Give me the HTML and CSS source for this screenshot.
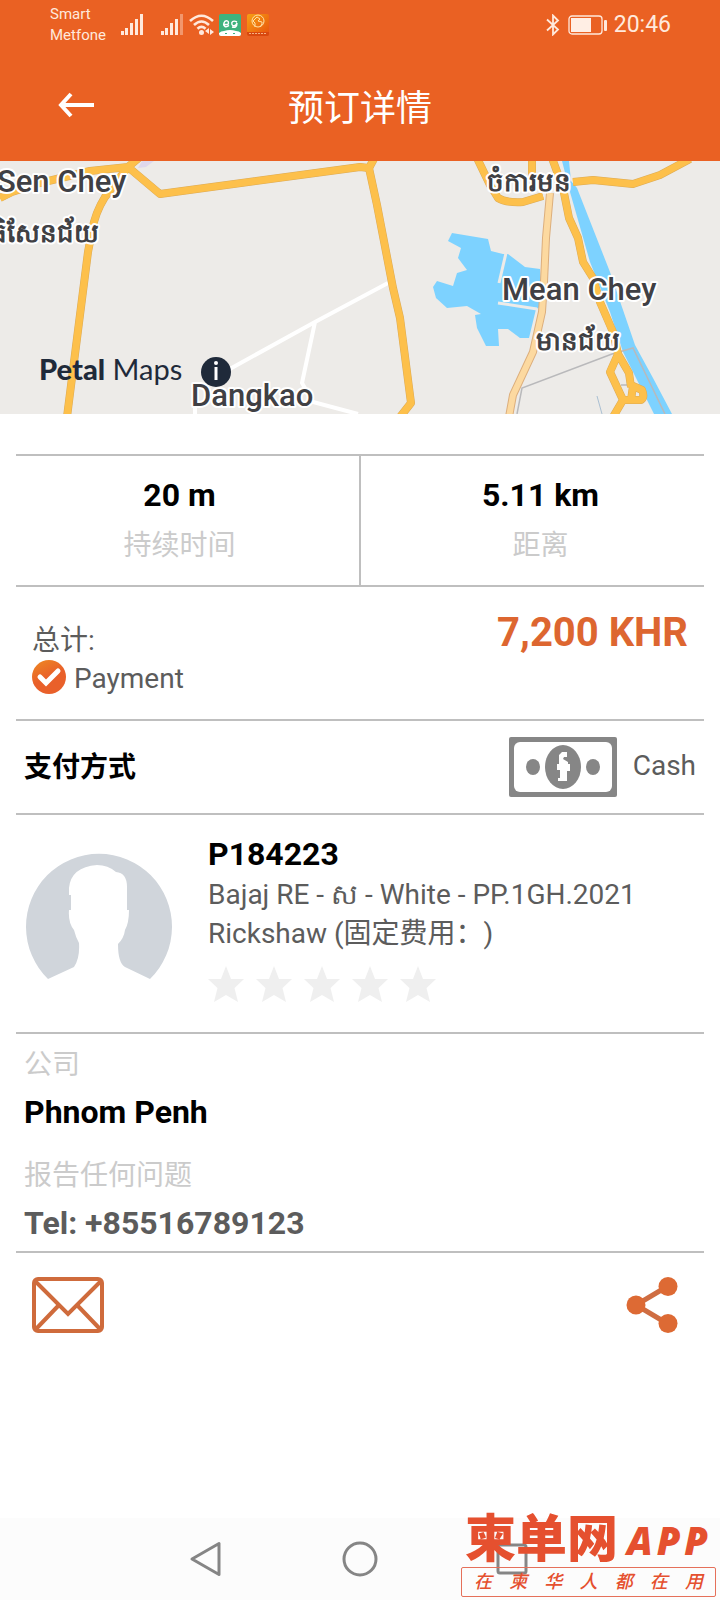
FILE: index.html
```html
<!DOCTYPE html>
<html lang="zh-CN">
<head>
  <meta charset="UTF-8">
  <meta name="viewport" content="width=device-width, initial-scale=1.0">
  <title>预订详情</title>
  <link rel="stylesheet" href="styles.css">
</head>
<body>
  <header class="header">
    <div class="status-bar">
      <div class="carriers">Smart<br>Metfone</div>
      <svg class="signal" width="22" height="22" viewBox="0 0 22 22" fill="#ffe9dc">
        <rect x="0" y="17" width="3" height="4"/><rect x="4" y="14" width="3" height="7"/><rect x="9" y="9" width="3" height="12"/><rect x="14" y="5" width="3" height="16"/><rect x="19" y="0" width="3" height="21"/>
      </svg>
      <svg class="signal" width="22" height="22" viewBox="0 0 22 22" fill="#ffe9dc">
        <rect x="0" y="17" width="3" height="4"/><rect x="4" y="14" width="3" height="7"/><rect x="9" y="9" width="3" height="12"/><rect x="14" y="5" width="3" height="16"/><rect x="19" y="0" width="3" height="21" opacity=".4"/>
      </svg>
      <svg class="wifi" width="26" height="22" viewBox="0 0 26 22">
        <g fill="none" stroke="#ffe9dc" stroke-width="2.6"><path d="M1 7Q12.500-3.500 24 7"/><path d="M5 11Q12.500 4 20 11"/><path d="M8.500 14.800Q12.500 11 16.500 14.800"/></g>
        <circle cx="12.500" cy="18.500" r="2.500" fill="#ffe9dc"/>
        <path d="M16 17l4-3v6zM25 18l-4-3v6z" fill="#ffe9dc"/>
      </svg>
      <svg class="app-green" width="22" height="22" viewBox="0 0 22 22">
        <rect width="22" height="22" rx="2" fill="#3eb27e"/>
        <path d="M4 10.500h5c2-4-3-5-4-1.500s2 5 5 2.500M18 8c-4-2-6 0-5 2.500s4 1 5-1.500c0 4-2 5-5 4" fill="none" stroke="#fff" stroke-width="1.400"/>
        <path d="M0 19q2-2 5-2 6-2 12 0 3 0 5 2v1q0 2-2 2H2q-2 0-2-2z" fill="#fff"/>
        <path d="M6 19h2v1H6zM14 19h2v1h-2z" fill="#3eb27e"/>
      </svg>
      <svg width="22" height="22" viewBox="0 0 22 22">
        <defs><linearGradient id="appOrange" x1="0" y1="0" x2="1" y2="1"><stop offset="0" stop-color="#f7a014"/><stop offset="1" stop-color="#e8500c"/></linearGradient></defs>
        <rect width="22" height="22" rx="2" fill="url(#appOrange)"/>
        <circle cx="11" cy="7" r="6" fill="none" stroke="#ffe2a8"/>
        <path d="M8 13V9L6 7l4-4 3 2-2 2 4 1v2l-2 3" fill="none" stroke="#ffe2a8"/>
        <path d="M0 18h22v2q0 2-2 2H2q-2 0-2-2z" fill="#d9480f"/>
        <path d="M2 19.500h18" stroke="#f4b183" stroke-dasharray="2 1"/>
      </svg>
      <div class="status-right">
        <svg width="14" height="22" viewBox="0 0 14 22" fill="none" stroke="#ffe9dc" stroke-width="1.800"><path d="M1 5.500L12 15.500L7 20.500V1.500L12 6.500L1 16.500"/></svg>
        <svg width="40" height="20" viewBox="0 0 40 20">
          <rect x="1" y="1" width="33" height="18" rx="3" fill="none" stroke="#ffe9dc" stroke-width="1.300"/>
          <rect x="3" y="3" width="20" height="14" fill="#ffeee4"/>
          <rect x="36" y="5" width="3" height="11" rx="1" fill="#ffe9dc"/>
        </svg>
        <span class="time">20:46</span>
      </div>
    </div>
    <div class="app-bar">
      <button class="back-btn" aria-label="返回">
        <svg width="36" height="26" viewBox="0 0 36 26" fill="none" stroke="#fff" stroke-width="4"><path d="M2 13H36M13 2L3 13L13 24"/></svg>
      </button>
      <h1 class="title">预订详情</h1>
    </div>
  </header>

  <svg class="map" viewBox="0 0 720 253" preserveAspectRatio="xMidYMid slice">
    <defs>
      <g id="roads" fill="none" stroke-linejoin="round">
        <path d="M0 37L12 31L40 22L90 10L128 6L140-4M128 6L160 33L360 6L369 7L375-4"/>
        <path d="M369 7L377 44L393 127L400 157L411 242L400 256"/>
        <path d="M128 6L105 36Q95 52 92 70L88 91L67 256"/>
        <path d="M477-3L490 24L498 37Q506 42 523 41L543 35M532-2V16"/>
        <path d="M552-3L563 27L569 57L578 77L583 101L593 117L600 141L613 171L618 193"/>
        <path d="M618 193L610 211L623 239L613 256M618 193L629 212L631 226M624 239H641Q645 236 642 229L633 225L631 239"/>
        <path d="M573 21L593 19L633 23L660 14L690-2"/>
      </g>
      <path id="side-road" fill="none" d="M550 32L546 77L544 121L542 151L533 191L513 234L509 256"/>
    </defs>
    <rect width="720" height="253" fill="#edebe8"/>
    <path d="M142 0h12l-8 6-8 1z" fill="#dfd8ec"/>

    <!-- water -->
    <g fill="#7dd2ff">
      <path d="M562 0H569L571 20L577 27L610 111L635 184L653 217L672 253H654L623 191L610 151L590 101L570 31Z"/>
      <path d="M452 72L488 78L491 90L503 93L508 93L525 106L540 108L542 145L536 148L529 177H520L508 168H498L499 185H486L477 167L475 154L481 153L467 145L447 147L436 137L433 126L437 120L453 125L457 112L467 109L458 97L461 87L448 80Z"/>
    </g>
    <path d="M506 92L499 122M498 142L537 148" fill="none" stroke="#edebe8" stroke-width="3"/>

    <!-- small roads and borders -->
    <path d="M228 209L315 161L388 122M315 161L302 222L313 241L358 253M195 246V253" fill="none" stroke="#fff" stroke-width="4"/>
    <path d="M517 253L522 227L612 193L633 187L665 253M621 224H632" fill="none" stroke="#b9b9bb" stroke-width="1.500"/>
    <path d="M597 235L602 253" stroke="#a9bfd2"/>

    <!-- main roads, casing first -->
    <use href="#roads" stroke="#dcaa55" stroke-width="8"/>
    <use href="#roads" stroke="#fdc04b" stroke-width="7"/>
    <use href="#side-road" stroke="#dcae7c" stroke-width="8"/>
    <use href="#side-road" stroke="#fcd9a0" stroke-width="6"/>

    <g class="place">
      <text x="-3" y="31">Sen Chey</text>
      <text x="502" y="139">Mean Chey</text>
      <text x="191" y="245">Dangkao</text>
    </g>
    <g class="place khmer">
      <text x="99" y="81" text-anchor="end">ធិសែនជ័យ</text>
      <text x="487" y="30">ចំការមន</text>
      <text x="536" y="189">មានជ័យ</text>
    </g>
    <text class="map-logo" x="39" y="219"><tspan class="map-logo-bold">Petal</tspan> Maps</text>
    <circle cx="216" cy="211" r="15" fill="#1f2a3a"/>
    <path d="M216 206V219" stroke="#fff" stroke-width="3"/>
    <circle cx="216" cy="202" r="2" fill="#fff"/>
  </svg>

  <main class="details">
    <section class="stats">
      <div class="stat">
        <div class="value">20 m</div>
        <div class="label">持续时间</div>
      </div>
      <div class="stat">
        <div class="value">5.11 km</div>
        <div class="label">距离</div>
      </div>
    </section>

    <section class="total">
      <div>
        <div class="total-line">总计:</div>
        <div class="total-line">
          <svg width="34" height="34" viewBox="0 0 34 34">
            <defs><linearGradient id="check" x1="0" y1="0" x2=".5" y2="1"><stop offset="0" stop-color="#ee8a22"/><stop offset=".6" stop-color="#e9602a"/></linearGradient></defs>
            <circle cx="17" cy="17" r="17" fill="url(#check)"/>
            <path d="M8 17L14 23L26 11" fill="none" stroke="#fff" stroke-width="5" stroke-linecap="round"/>
          </svg>
          <span class="payment">Payment</span>
        </div>
      </div>
      <div class="amount">7,200 KHR</div>
    </section>

    <section class="method">
      <h2 class="method-title">支付方式</h2>
      <svg width="108" height="60" viewBox="0 0 108 60">
        <rect width="108" height="60" rx="2" fill="#868686"/>
        <rect x="5" y="5" width="98" height="50" rx="6" fill="#fff"/>
        <ellipse cx="54" cy="30" rx="18" ry="22" fill="#868686"/>
        <ellipse cx="24" cy="30" rx="7" ry="8" fill="#868686"/>
        <ellipse cx="84" cy="30" rx="7" ry="8" fill="#868686"/>
        <path d="M49 44V41H51V33H48V27H50V18L53 15H58V20H55L54 22L59 25V27H61V34H58V44Z" fill="#fff"/>
      </svg>
      <span class="method-name">Cash</span>
    </section>

    <section class="driver">
      <svg class="avatar" width="146" height="146" viewBox="0 0 146 146">
        <path d="M22 126A73 73 0 1 1 124 126L99 114Q92 110 92 91Q98 85 99 77Q103 70 103 57H101V34Q101 20 90 19Q82 12 71 12Q45 14 43 35V42H45V57H43Q42 70 48 77Q50 85 53 90Q54 105 48 114Z" fill="#d0d5db"/>
      </svg>
      <div class="driver-info">
        <div class="driver-name">P184223</div>
        <div>Bajaj RE - ស - White - PP.1GH.2021</div>
        <div>Rickshaw (固定费用：)</div>
        <div class="stars" role="img" aria-label="0 / 5">
          <svg width="36" height="36" viewBox="0 0 36 36"><path id="star" d="M18 0L23 13H36L26.500 22L30 36L18 29L6 36L9.500 22L0 13H13Z" fill="#efefef"/></svg>
          <svg width="36" height="36" viewBox="0 0 36 36"><use href="#star"/></svg>
          <svg width="36" height="36" viewBox="0 0 36 36"><use href="#star"/></svg>
          <svg width="36" height="36" viewBox="0 0 36 36"><use href="#star"/></svg>
          <svg width="36" height="36" viewBox="0 0 36 36"><use href="#star"/></svg>
        </div>
      </div>
    </section>

    <section class="company">
      <div>
        <div class="label">公司</div>
        <div class="company-value">Phnom Penh</div>
      </div>
      <div>
        <div class="label">报告任何问题</div>
        <a class="company-value tel" href="tel:+85516789123">Tel: +85516789123</a>
      </div>
    </section>

    <section class="actions">
      <button class="icon-btn" aria-label="邮件">
        <svg width="72" height="56" viewBox="0 0 72 56" fill="none" stroke="#cf6b3c" stroke-width="4"><rect x="2" y="2" width="68" height="52" rx="4"/><path d="M3 4L36 37L69 4M4 52L27 28M68 52L45 28"/></svg>
      </button>
      <button class="icon-btn" aria-label="分享">
        <svg width="52" height="56" viewBox="0 0 52 56" fill="#dd6a34"><path d="M42 9L10 28L42 47" fill="none" stroke="#cf6d42" stroke-width="5"/><circle cx="42" cy="9.500" r="9.500"/><circle cx="10" cy="28" r="9.500"/><circle cx="42" cy="46.500" r="9.500"/></svg>
      </button>
    </section>
  </main>

  <footer class="nav-bar">
    <button class="nav-btn" aria-label="后退">
      <svg width="36" height="36" viewBox="0 0 36 36"><path d="M31 2.500V33.500L4 18Z"/></svg>
    </button>
    <button class="nav-btn" aria-label="主页">
      <svg width="36" height="36" viewBox="0 0 36 36"><circle cx="18" cy="18" r="16"/></svg>
    </button>
    <button class="nav-btn" aria-label="最近">
      <svg width="36" height="36" viewBox="0 0 36 36"><rect x="2" y="4" width="28" height="28" rx="2"/></svg>
    </button>
    <div class="brand">
      <div class="brand-top">
        <span class="brand-name">柬单网</span>
        <span class="brand-app"><span>A</span><span>P</span><span>P</span></span>
      </div>
      <div class="brand-slogan"><span>在</span><span>柬</span><span>华</span><span>人</span><span>都</span><span>在</span><span>用</span></div>
    </div>
  </footer>
</body>
</html>
```
FILE: styles.css
```css
* {
  box-sizing: border-box;
}
body {
  margin: 0;
  min-height: 100vh;
  display: flex;
  flex-direction: column;
  background: #fff;
  color: #5c5c5c;
  font-family: Roboto, "Noto Sans CJK SC", sans-serif;
  font-size: 28px;
  text-spacing-trim: space-all;
}
svg {
  display: block;
  flex: none;
}
button {
  padding: 0;
  border: none;
  background: none;
  cursor: pointer;
}

/* header */
.header {
  background: #ea6123;
  color: #fff;
}
.status-bar {
  display: flex;
  align-items: center;
  height: 49px;
  padding: 0 49px 0 50px;
  color: #ffe9dc;
}
.carriers {
  width: 71px;
  padding-top: 1px;
  font-size: 15px;
  line-height: 21px;
}
.signal {
  margin-right: 18px;
}
.signal + .signal {
  margin-right: 6px;
}
.wifi {
  margin-right: 4px;
}
.app-green {
  margin-right: 6px;
}
.status-right {
  display: flex;
  align-items: center;
  gap: 8px;
  margin-left: auto;
}
.time {
  margin-left: -2px;
  font-size: 23px;
}
.app-bar {
  display: grid;
  grid-template-columns: 1fr auto 1fr;
  align-items: center;
  height: 112px;
  padding: 0 58px;
}
.title {
  margin: 0;
  font-size: 36px;
  font-weight: 400;
}

/* map */
.map {
  width: 100%;
}
.place {
  font-size: 31px;
  font-weight: 500;
  fill: #404044;
  stroke: #fff;
  stroke-width: 4px;
  stroke-linejoin: round;
  paint-order: stroke;
}
.khmer {
  font-size: 26px;
  font-weight: 600;
}
.map-logo {
  font-family: Lato, sans-serif;
  font-size: 29px;
  fill: #1f2a3a;
}
.map-logo-bold {
  font-weight: 900;
}

/* details */
.details {
  padding: 40px 16px 0;
}
.details section {
  border-bottom: 2px solid #bfbfbf;
}
.label {
  padding-top: 3px;
  color: #cbcbcb;
}
.stats {
  display: flex;
  border-top: 2px solid #bfbfbf;
}
.stat {
  flex: 1;
  padding: 15px 16px 15px 0;
  line-height: 48px;
  text-align: center;
}
.stat + .stat {
  padding-right: 0;
  padding-left: 16px;
  border-left: 2px solid #bfbfbf;
}
.value {
  color: #000;
  font-size: 32px;
  font-weight: 700;
}
.total {
  display: flex;
  justify-content: space-between;
  padding: 22px 16px;
}
.total-line {
  display: flex;
  align-items: center;
  gap: 8px;
  height: 40px;
}
.total-line:first-child {
  height: 48px;
  padding-top: 10px;
}
.payment {
  padding-top: 3px;
}
.amount {
  color: #dd6630;
  font-size: 40px;
  font-weight: 700;
  line-height: 48px;
}
.method {
  display: flex;
  align-items: center;
  gap: 16px;
  padding: 16px 8px;
}
.method-title {
  flex: 1;
  margin: 0;
  padding-bottom: 4px;
  color: #000;
  font-size: 28px;
  font-weight: 700;
}
.method-name {
  padding-bottom: 4px;
}
.driver {
  display: flex;
  gap: 36px;
  padding: 20px 10px 30px;
  line-height: 39px;
}
.avatar {
  margin-top: 18px;
}
.driver-name {
  padding-bottom: 1px;
  color: #000;
  font-size: 32px;
  font-weight: 700;
}
.stars {
  display: flex;
  gap: 12px;
  margin-top: 13px;
}
.company {
  display: grid;
  gap: 12px;
  padding: 6px 8px 1px;
  line-height: 44px;
}
.company-value {
  display: block;
  color: #000;
  font-size: 32px;
  font-weight: 700;
  line-height: 51px;
}
.tel {
  color: #5c5c5c;
  text-decoration: none;
}
.company .label + .company-value {
  padding-bottom: 1px;
}
.details .actions {
  display: flex;
  justify-content: space-between;
  padding: 24px 26px 24px 16px;
  border-bottom: none;
}

/* bottom navigation */
.nav-bar {
  position: relative;
  display: flex;
  justify-content: center;
  align-items: center;
  gap: 118px;
  height: 82px;
  margin-top: auto;
  background: #fcfcfc;
}
.nav-btn svg {
  fill: none;
  stroke: #858585;
  stroke-width: 3px;
  stroke-linejoin: round;
}
.brand {
  position: absolute;
  right: 4px;
  bottom: 3px;
  width: 255px;
  color: #e5502f;
}
.brand-top {
  display: flex;
  align-items: center;
  justify-content: space-between;
  padding: 0 8px 0 4px;
  line-height: 54px;
}
.brand-name {
  font-size: 51px;
  font-weight: 900;
}
.brand-app {
  display: flex;
  gap: 4px;
  font-family: "Open Sans", sans-serif;
  font-size: 38px;
  font-style: italic;
  font-weight: 800;
}
.brand-slogan {
  display: flex;
  justify-content: space-between;
  padding: 0 12px;
  border: 1px solid #e5705a;
  border-radius: 2px;
  font-size: 18px;
  font-style: italic;
  font-weight: 500;
  line-height: 28px;
}
```
